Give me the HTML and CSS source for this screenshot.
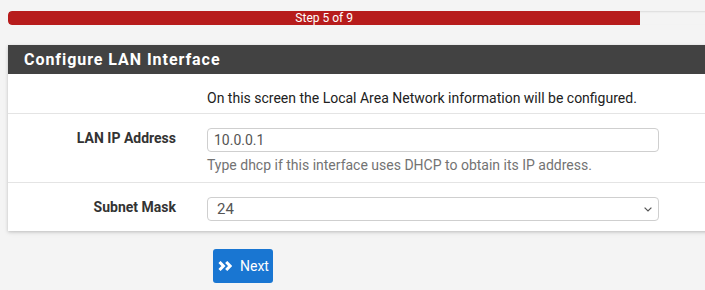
FILE: index.html
```html
<!DOCTYPE html>
<html lang="en">
<head>
<meta charset="utf-8">
<title>Configure LAN Interface</title>
<link rel="stylesheet" href="styles.css">
</head>
<body>
<div class="viewport">
<div class="page">
  <div class="progress">
    <div class="progress-bar" style="width: 55.56%">Step 5 of 9</div>
  </div>

  <div class="panel">
    <h2 class="panel-heading">Configure LAN Interface</h2>
    <div class="panel-body">
      <div class="row row-intro">
        <div class="row-label"></div>
        <div class="row-control">On this screen the Local Area Network information will be configured.</div>
      </div>
      <div class="row row-field">
        <div class="row-label">LAN IP Address</div>
        <div class="row-control">
          <input class="text-input" type="text" value="10.0.0.1">
          <div class="help">Type dhcp if this interface uses DHCP to obtain its IP address.</div>
        </div>
      </div>
      <div class="row row-field row-last">
        <div class="row-label">Subnet Mask</div>
        <div class="row-control">
          <div class="select-wrap">
            <select class="select-input">
              <option>24</option>
            </select>
            <svg class="select-caret" width="8" height="5" viewBox="0 0 8 5" aria-hidden="true">
              <polyline points="0.6,0.6 4,4 7.4,0.6" fill="none" stroke="#555" stroke-width="1.2"/>
            </svg>
          </div>
        </div>
      </div>
    </div>
  </div>

  <div class="actions">
    <button class="btn-next" type="button">
      <svg class="btn-icon" width="14" height="10" viewBox="0 0 14 10" aria-hidden="true">
        <polyline points="1.5,1 5.4,5 1.5,9" fill="none" stroke="#fff" stroke-width="3" stroke-linejoin="miter"/>
        <polyline points="8.2,1 12.1,5 8.2,9" fill="none" stroke="#fff" stroke-width="3" stroke-linejoin="miter"/>
      </svg>
      <span>Next</span>
    </button>
  </div>
</div>
</div>
</body>
</html>
```

FILE: styles.css
```css
html, body {
  margin: 0;
  padding: 0;
}

body {
  background: #f4f4f4;
  font-family: Roboto, "Liberation Sans", Arial, sans-serif;
  font-size: 14px;
  color: #212121;
}

.viewport {
  width: 100vw;
  height: 100vh;
  overflow: hidden;
}

.page {
  width: 1138px;
  padding: 11px 0 0 8px;
}

.progress {
  height: 14px;
  background: #f4f4f4;
  border-radius: 4px;
  box-shadow: inset 0 1px 2px rgba(0, 0, 0, 0.1);
  overflow: hidden;
}

.progress-bar {
  height: 14px;
  background: #b71c1c;
  color: #fff;
  font-size: 12px;
  line-height: 14px;
  text-align: center;
  border-radius: 4px 0 0 4px;
}

.panel {
  margin-top: 20px;
  background: #fff;
  box-shadow: 0 1px 3px rgba(0, 0, 0, 0.18), 0 2px 6px rgba(0, 0, 0, 0.06);
}

.panel-heading {
  margin: 0;
  height: 29px;
  box-sizing: border-box;
  padding: 1px 0 0 16px;
  background: #424242;
  color: #fff;
  font-size: 16px;
  font-weight: 700;
  line-height: 28px;
  letter-spacing: 0.95px;
}

.row {
  display: flex;
  border-bottom: 1px solid #e4e4e4;
}

.row-intro {
  padding: 14px 0 5px;
  line-height: 20px;
  color: #212121;
}

.row-field {
  padding: 14px 0 7px;
}

.row-last {
  padding-bottom: 10px;
  border-bottom: none;
}

.row-label {
  flex: 0 0 168px;
  text-align: right;
  font-weight: 700;
  color: #333;
  line-height: 18px;
  padding-top: 1px;
}

.row-control {
  margin-left: 31px;
  width: 452px;
}

.text-input,
.select-input {
  display: block;
  box-sizing: border-box;
  width: 452px;
  height: 24px;
  margin: 0;
  border: 1px solid #cfcfcf;
  border-radius: 4px;
  background: #fff;
  font-family: Roboto, "Liberation Sans", Arial, sans-serif;
  font-size: 14px;
  color: #555;
  outline: none;
}

.text-input {
  padding: 0 6px;
}

.help {
  margin-top: 3px;
  line-height: 20px;
  color: #737373;
}

.select-wrap {
  position: relative;
}

.select-input {
  appearance: none;
  -webkit-appearance: none;
  padding: 0 24px 0 9px;
  font-size: 15px;
}

.select-caret {
  position: absolute;
  right: 7px;
  top: 10px;
}

.actions {
  padding: 18px 0 0 205px;
}

.btn-next {
  display: flex;
  align-items: center;
  gap: 8px;
  height: 34px;
  padding: 0 4px 1px 5px;
  border: none;
  border-radius: 3px;
  background: #1976d2;
  color: #fff;
  font-family: Roboto, "Liberation Sans", Arial, sans-serif;
  font-size: 14px;
  cursor: pointer;
}

.btn-icon {
  display: block;
}
```
